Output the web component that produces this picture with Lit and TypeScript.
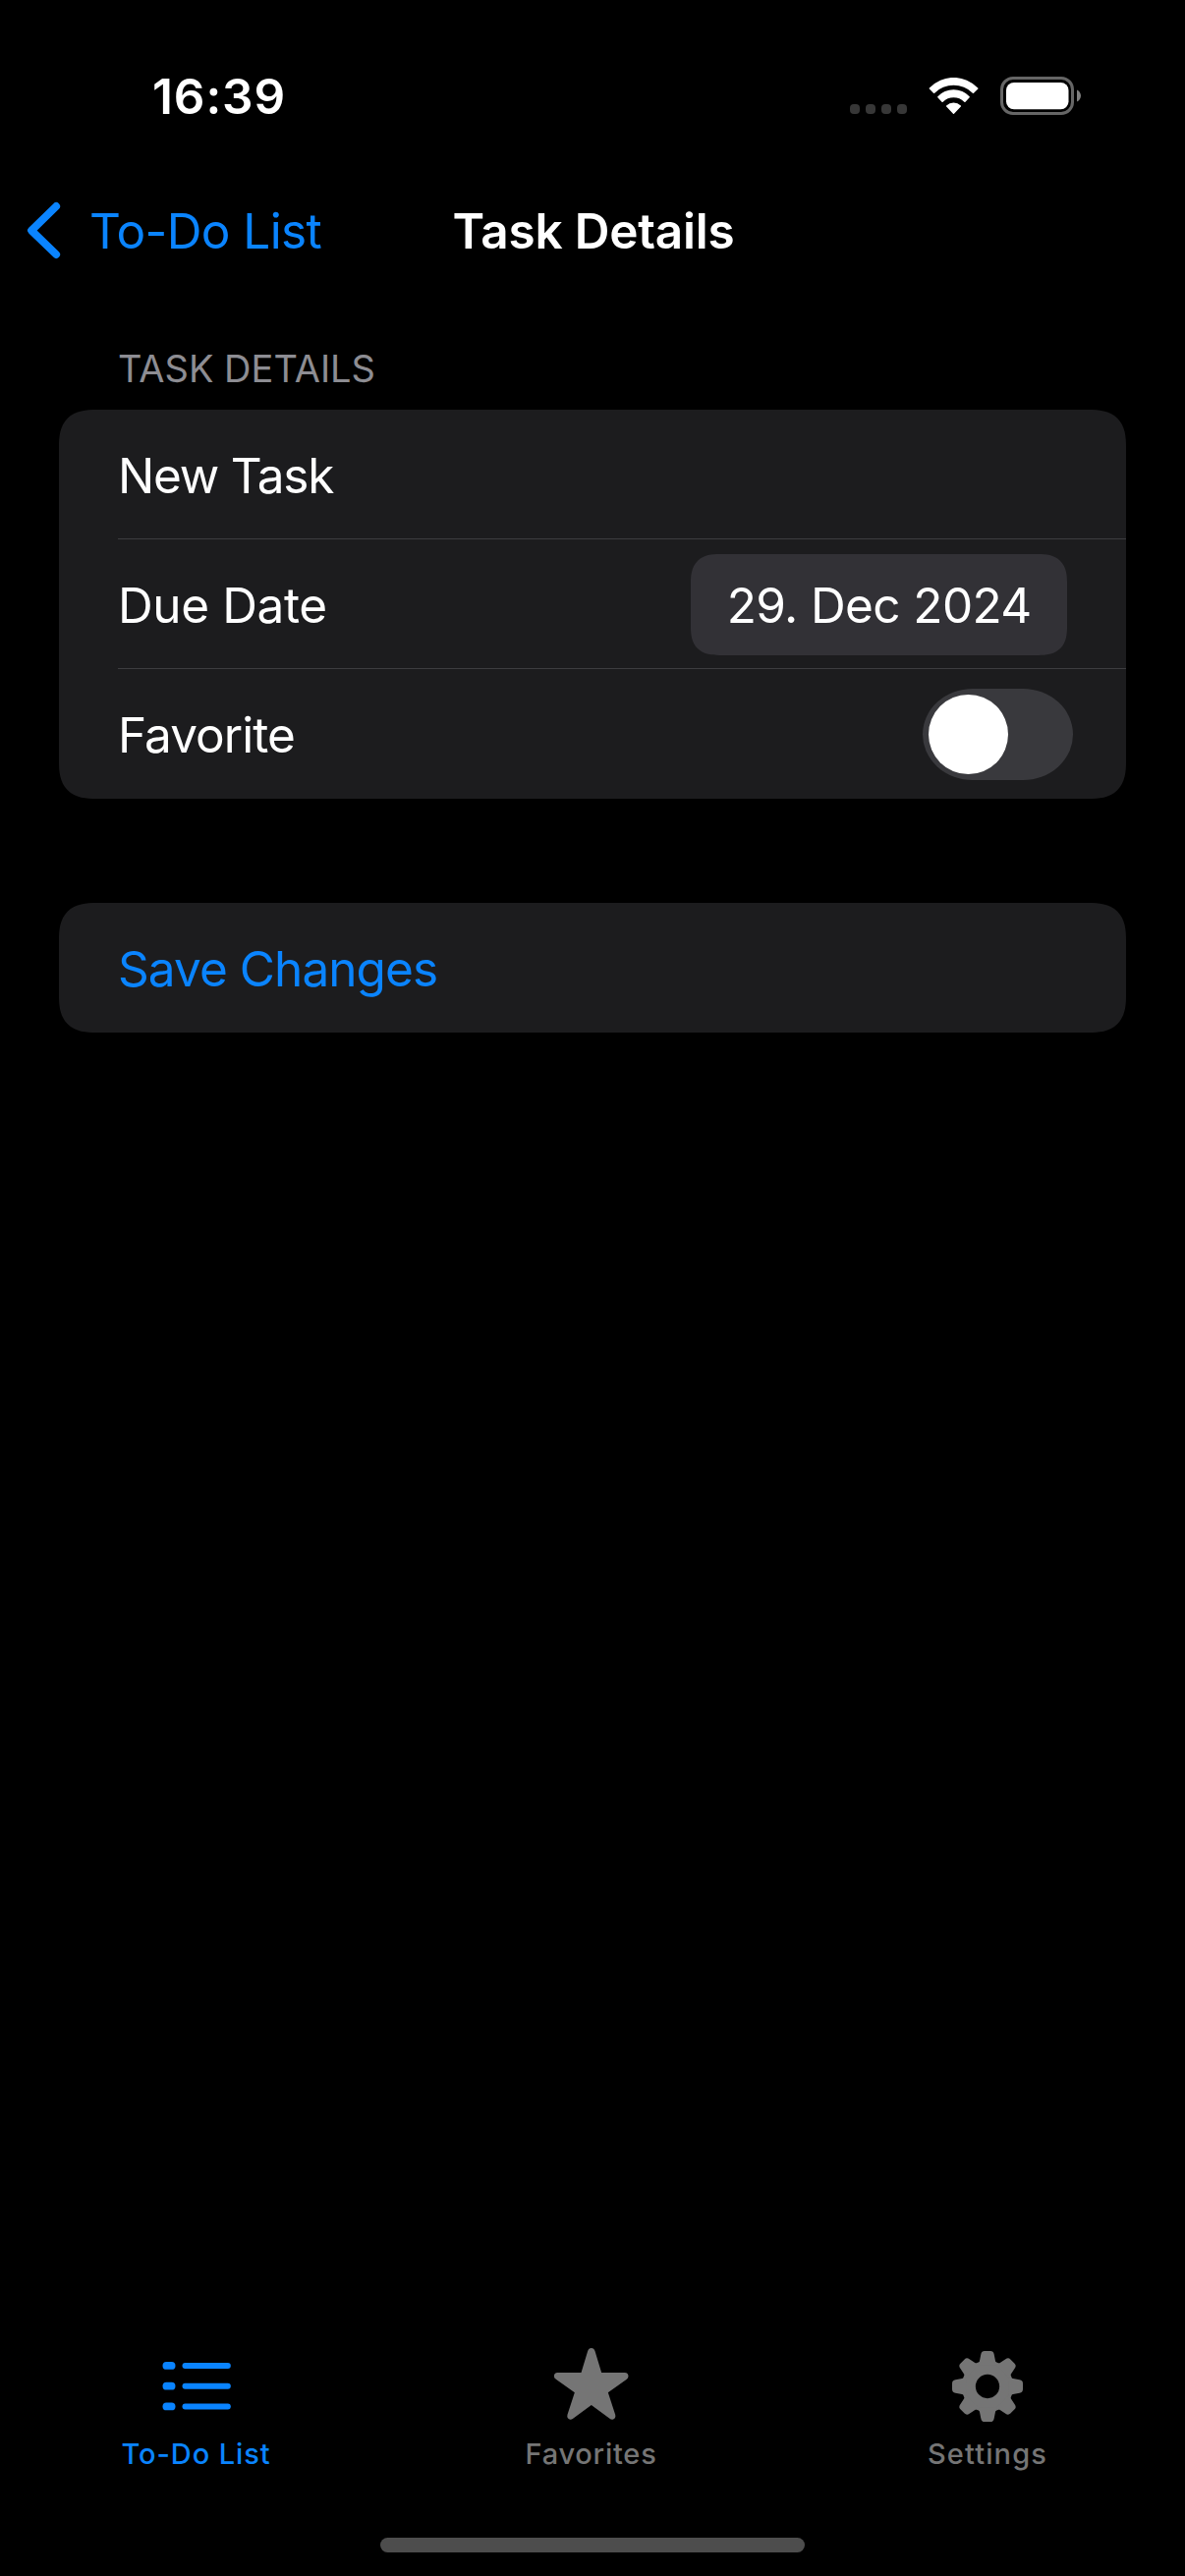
import { LitElement, html, css, svg } from "lit";
import { customElement, property, state } from "lit/decorators.js";
import { classMap } from "lit/directives/class-map.js";

@customElement("status-bar")
class StatusBar extends LitElement {
  static styles = css`
    :host {
      display: flex;
      justify-content: space-between;
      height: 180px;
      box-sizing: border-box;
      padding: 68px 105.5px 0 154.9px;
    }
    .time {
      font-size: 49.5px;
      font-weight: 600;
      line-height: 60px;
      letter-spacing: 0.95px;
    }
    .indicators {
      display: flex;
      align-items: flex-start;
    }
    .signal {
      display: flex;
      gap: 6px;
      padding-top: 38px;
      margin-right: 22px;
    }
    .dot {
      width: 10px;
      height: 10px;
      border-radius: 4px;
      background: #373737;
    }
    .wifi {
      width: 51px;
      height: 37px;
      margin: 11px 22px 0 0;
    }
    .battery {
      width: 82.5px;
      height: 39px;
      margin-top: 10px;
    }
    svg {
      display: block;
    }
  `;

  render() {
    return html`
      <span class="time">16:39</span>
      <div class="indicators">
        <div class="signal">
          ${[0, 1, 2, 3].map(() => html`<span class="dot"></span>`)}
        </div>
        <svg class="wifi" viewBox="315 57 153 111" fill="#fff">
          <path
            d="M317.500 91.500 Q316 90 317.500 88.500 A102 102 0 0 1 465.500 88.500 Q467.500 90 466 91.500 L453 104 Q451.500 105.500 449.500 104 A83 83 0 0 0 333.500 104 Q331.500 105.500 330 104 Z"
          />
          <path
            d="M343 118 Q341.500 116.500 343 115 A66 66 0 0 1 440 115 Q441.500 116.500 440 118 L427.500 131 Q426 132.500 424 131 A47 47 0 0 0 359 131 Q357 132.500 355.500 131 Z"
          />
          <path
            d="M369.500 145.500 Q368 144 369.500 142.500 A32 32 0 0 1 413.500 142.500 Q415 144 413.500 145.500 L393 167 Q391.500 168.500 390 167 Z"
          />
        </svg>
        <svg class="battery" viewBox="0 0 82.5 39">
          <rect x="1.5" y="1.5" width="72" height="36" rx="11.500" fill="none" stroke="#666" stroke-width="3" />
          <rect x="6" y="6" width="63.500" height="27.300" rx="8" fill="#fff" />
          <path d="M78 13.500 C80.500 14.500 82 17 82 19.500 C82 22 80.500 24.500 78 25.500 Z" fill="#808080" />
        </svg>
      </div>
    `;
  }
}

@customElement("nav-bar")
class NavBar extends LitElement {
  @property() back = "";
  @property() heading = "";

  static styles = css`
    :host {
      display: grid;
      grid-template-columns: 1fr auto 1fr;
      height: 132px;
      box-sizing: border-box;
      padding: 25px 0 0 2px;
      font-size: 49.5px;
      line-height: 60px;
    }
    .back {
      display: flex;
      padding-left: 25px;
      color: #0a84ff;
      letter-spacing: -0.6px;
      white-space: nowrap;
    }
    .chevron {
      width: 36px;
      height: 60px;
      margin-right: 28px;
      display: block;
    }
    .heading {
      margin: 0;
      font-size: inherit;
      font-weight: 600;
      letter-spacing: -0.22px;
    }
  `;

  render() {
    return html`
      <div class="back">
        <svg class="chevron" viewBox="27 205 36 60">
          <path
            d="M57.200 210 L32 234.600 L57.200 259"
            fill="none"
            stroke="#0a84ff"
            stroke-width="7.800"
            stroke-linecap="round"
            stroke-linejoin="round"
          />
        </svg>
        <span>${this.back}</span>
      </div>
      <h1 class="heading">${this.heading}</h1>
    `;
  }
}

@customElement("toggle-switch")
class ToggleSwitch extends LitElement {
  @property({ type: Boolean, reflect: true }) on = false;

  static styles = css`
    :host {
      display: flex;
      width: 153px;
      height: 93px;
      box-sizing: border-box;
      padding: 6px;
      border-radius: 51px / 46.5px;
      background: #39393d;
    }
    :host([on]) {
      justify-content: flex-end;
      background: #30d158;
    }
    .knob {
      width: 81px;
      height: 81px;
      border-radius: 50%;
      background: #fff;
    }
  `;

  render() {
    return html`<span class="knob"></span>`;
  }
}

const listIcon = svg`
  <svg viewBox="178.5 24 240 240" fill="currentColor">
    ${[84, 146.3, 208.5].map(
      (y) => svg`
        <rect x="195" y=${y - 12} width="39" height="23.500" rx="11.700" />
        <rect x="255" y=${y - 9} width="148" height="18" rx="9" />`
    )}
  </svg>`;

const starIcon = svg`
  <svg viewBox="154.5 54 240 240" fill="currentColor">
    <path d="M243 135 L263 69 Q266 60 274 60 Q282 60 285 69 L305 135 H376 Q387 136 387 146 Q387 151 381 156 L325 196
      L347 263 Q350 275 339 278 Q334 278.500 330 275 L274 234 L218 275 Q214 278.500 209 278 Q198 275 201 263 L223 196
      L167 156 Q160 151 160 146 Q160 136 171 135 Z" />
  </svg>`;

const gearIcon = svg`
  <svg viewBox="135 54 240 240" fill="currentColor">
    <circle cx="255" cy="177" r="57.500" fill="none" stroke="currentColor" stroke-width="42" />
    ${[0, 45, 90, 135, 180, 225, 270, 315].map(
      (a) => svg`
        <path transform="rotate(${a} 255 177)"
          d="M227 106 Q230 104 231 99 L235 79 Q237 69 246 69 H264 Q273 69 275 79 L279 99 Q280 104 283 106 V112 H227 Z" />`
    )}
  </svg>`;

@customElement("tab-bar")
class TabBar extends LitElement {
  @state() private active = 0;

  private tabs = [
    { label: "To-Do List", icon: listIcon, cls: "todo" },
    { label: "Favorites", icon: starIcon, cls: "favorites" },
    { label: "Settings", icon: gearIcon, cls: "settings" },
  ];

  static styles = css`
    :host {
      display: grid;
      grid-template-columns: 399px 405px 402px;
      height: 195px;
    }
    .tab {
      display: flex;
      flex-direction: column;
      align-items: center;
      gap: 12px;
      color: #757575;
      font-size: 29px;
      font-weight: 500;
      line-height: 35px;
    }
    .tab.active {
      color: #0a84ff;
    }
    .tab svg {
      display: block;
      width: 80px;
      height: 80px;
    }
    .todo {
      letter-spacing: 0.91px;
    }
    .favorites {
      letter-spacing: 0.76px;
    }
    .settings {
      letter-spacing: 1.12px;
    }
  `;

  render() {
    return this.tabs.map(
      (t, i) => html`
        <div
          class=${classMap({ tab: true, active: i === this.active })}
          @click=${() => (this.active = i)}
        >
          ${t.icon}
          <span class=${t.cls}>${t.label}</span>
        </div>
      `
    );
  }
}

@customElement("app-root")
class AppRoot extends LitElement {
  static styles = css`
    :host {
      display: flex;
      flex-direction: column;
      width: 1206px;
      height: 2622px;
      overflow: hidden;
      background: #000;
      color: #fff;
      font-family: Inter, "Liberation Sans", sans-serif;
    }
    main {
      flex: 1;
      display: flex;
      flex-direction: column;
      padding: 40px 60px 0;
    }
    .section-title {
      margin: 0 0 19px;
      padding-left: 60px;
      font-size: 38px;
      font-weight: 400;
      line-height: 46px;
      color: #8d8d93;
    }
    .card {
      border-radius: 38px;
      corner-shape: superellipse(1.4);
      background: #1c1c1e;
      overflow: hidden;
      margin-bottom: 106px;
    }
    .row {
      display: flex;
      justify-content: space-between;
      align-items: flex-start;
      height: 132px;
      box-sizing: border-box;
      margin-left: 60px;
      padding-right: 60px;
    }
    .row.divided {
      border-bottom: 1px solid #3d3d40;
    }
    .row.switch {
      padding-right: 54px;
    }
    .label {
      padding-top: 37px;
      font-size: 49.5px;
      line-height: 60px;
    }
    .name {
      letter-spacing: -1.25px;
    }
    .due {
      letter-spacing: -0.4px;
    }
    .favorite {
      letter-spacing: -0.95px;
    }
    .save {
      color: #0a84ff;
      letter-spacing: -0.93px;
    }
    .date {
      width: 383px;
      height: 103px;
      box-sizing: border-box;
      margin-top: 15px;
      padding: 22px 0 0 36.7px;
      border-radius: 29px;
      corner-shape: superellipse(1.35);
      background: #323136;
      font-size: 49.5px;
      line-height: 60px;
      letter-spacing: -0.62px;
      white-space: nowrap;
    }
    toggle-switch {
      margin-top: 20px;
    }
    .home {
      width: 432px;
      height: 15px;
      margin: 0 auto 24px;
      border-radius: 7.5px;
      background: #4d4d4d;
    }
  `;

  render() {
    return html`
      <status-bar></status-bar>
      <nav-bar back="To-Do List" heading="Task Details"></nav-bar>
      <main>
        <h2 class="section-title">TASK DETAILS</h2>
        <div class="card">
          <div class="row divided"><span class="label name">New Task</span></div>
          <div class="row divided">
            <span class="label due">Due Date</span>
            <span class="date">29. Dec 2024</span>
          </div>
          <div class="row switch">
            <span class="label favorite">Favorite</span>
            <toggle-switch></toggle-switch>
          </div>
        </div>
        <div class="card">
          <div class="row"><span class="label save">Save Changes</span></div>
        </div>
      </main>
      <tab-bar></tab-bar>
      <div class="home"></div>
    `;
  }
}
